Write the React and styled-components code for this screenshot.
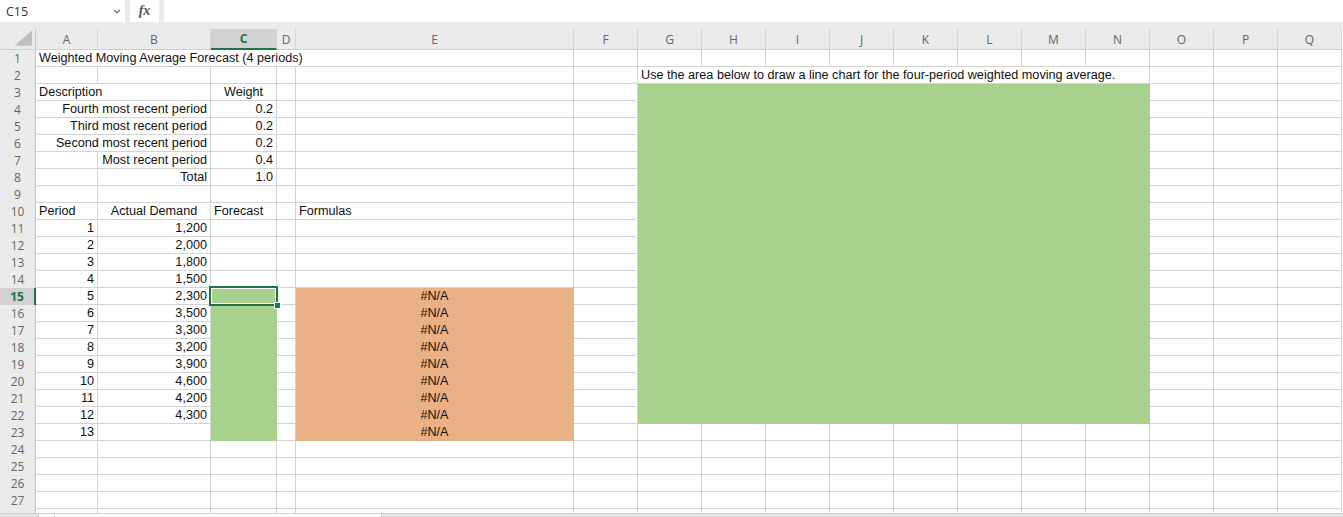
import React from "react";
import styled, { createGlobalStyle, css } from "styled-components";

const COLS = ["A", "B", "C", "D", "E", "F", "G", "H", "I", "J", "K", "L", "M", "N", "O", "P", "Q"];
const WIDTHS = [62, 113, 66, 19, 278, 64, 64, 64, 64, 64, 64, 64, 64, 64, 64, 64, 64];

const GREEN = "#a9d18e";
const ORANGE = "#ebb186";
const EXCEL = "#217346";
const GRID = "#d4d4d4";
const HEAD = "#ebebeb";

const GlobalStyle = createGlobalStyle`
  html, body { margin: 0; padding: 0; background: #fff; }
  body { font-family: "Liberation Sans", Arial, sans-serif; overflow: hidden; }
`;

const Window = styled.div`
  width: 1343px;
  height: 517px;
  display: flex;
  flex-direction: column;
  overflow: hidden;
  background: #fff;
`;

const FormulaBar = styled.div`
  display: flex;
  align-items: flex-start;
  gap: 5px;
  height: 29px;
  flex-shrink: 0;
  background: ${HEAD};
`;

const NameBox = styled.div`
  width: 125px;
  height: 22px;
  background: #fff;
  display: flex;
  align-items: center;
  justify-content: space-between;
  padding: 0 4px 0 6px;
  box-sizing: border-box;
  font-family: "Open Sans", "Noto Sans", sans-serif;
  font-size: 12.5px;
  color: #333;
`;

const FxBox = styled.div`
  width: 29px;
  height: 22px;
  background: #fff;
  display: flex;
  align-items: center;
  justify-content: center;
  font-family: "Liberation Serif", serif;
  font-style: italic;
  font-weight: 700;
  font-size: 14px;
  color: #555;
`;

const FormulaInput = styled.div`
  flex: 1;
  height: 22px;
  background: #fff;
`;

const Sheet = styled.div`
  flex: 1;
  overflow: hidden;
  display: grid;
  grid-template-columns: 36px ${WIDTHS.map((w) => w + "px").join(" ")};
  grid-template-rows: 21px;
  grid-auto-rows: 17px;
  align-content: start;
`;

const Corner = styled.div`
  background: ${HEAD};
  border-right: 1px solid #c6c6c6;
  border-bottom: 1px solid #cfcfcf;
  box-sizing: border-box;
  display: flex;
  align-items: flex-end;
  justify-content: flex-end;
`;

const ColHeader = styled.div`
  background: ${HEAD};
  border-right: 1px solid ${GRID};
  border-bottom: 1px solid #cfcfcf;
  box-sizing: border-box;
  display: flex;
  align-items: center;
  justify-content: center;
  font-family: "Open Sans", "Noto Sans", sans-serif;
  font-size: 12px;
  color: #666;
  ${(p) =>
    p.$active &&
    css`
      background: #d2d2d2;
      color: ${EXCEL};
      font-weight: 700;
      border-bottom: 2px solid ${EXCEL};
    `}
`;

const RowHeader = styled.div`
  background: ${HEAD};
  border-right: 1px solid #c6c6c6;
  box-sizing: border-box;
  display: flex;
  align-items: center;
  justify-content: center;
  font-family: "Open Sans", "Noto Sans", sans-serif;
  font-size: 12px;
  color: #666;
  ${(p) =>
    p.$active &&
    css`
      background: #d2d2d2;
      color: ${EXCEL};
      font-weight: 700;
      border-right: 2px solid ${EXCEL};
    `}
`;

const Cell = styled.div`
  grid-column: span ${(p) => p.$span || 1};
  box-sizing: border-box;
  border-right: 1px solid ${(p) => p.$fill || GRID};
  border-bottom: 1px solid ${(p) => p.$fill || GRID};
  background: ${(p) => p.$fill || "transparent"};
  padding: 0 3px;
  font-size: 12.65px;
  line-height: 17px;
  color: #111;
  white-space: nowrap;
  text-align: ${(p) => p.$align || "left"};
  ${(p) =>
    p.$selected &&
    css`
      position: relative;
      z-index: 2;
    `}
`;

const Selection = styled.div`
  position: absolute;
  top: -2px;
  left: -2px;
  right: -2px;
  bottom: -2px;
  border: 2px solid ${EXCEL};
  box-shadow: inset 0 0 0 1px #fff;
`;

const Handle = styled.div`
  position: absolute;
  right: -5px;
  bottom: -5px;
  width: 5px;
  height: 5px;
  background: ${EXCEL};
  border: 1px solid #fff;
`;

const ChartArea = styled.div`
  grid-column: 8 / 16;
  grid-row: 4 / 24;
  background: ${GREEN};
`;

const BottomBar = styled.div`
  height: 4px;
  flex-shrink: 0;
  background: #e6e6e6;
  border-top: 1px solid #d0d0d0;
  box-sizing: border-box;
  display: flex;
  padding-left: 38px;
`;

const ScrollTrack = styled.div`
  width: 342px;
  background: #fff;
  border-left: 1px solid #c6c6c6;
  border-right: 1px solid #c6c6c6;
  display: flex;
`;

const ScrollButton = styled.div`
  width: 15px;
  border-right: 1px solid #c6c6c6;
`;

const DEMAND = ["1,200", "2,000", "1,800", "1,500", "2,300", "3,500", "3,300", "3,200", "3,900", "4,600", "4,200", "4,300"];

const specs = {
  "1-0": { text: "Weighted Moving Average Forecast (4 periods)", span: 5 },
  "2-6": { text: "Use the area below to draw a line chart for the four-period weighted moving average.", span: 8 },
  "3-0": { text: "Description", span: 2 },
  "3-2": { text: "Weight", align: "center" },
  "4-0": { text: "Fourth most recent period", span: 2, align: "right" },
  "4-2": { text: "0.2", align: "right" },
  "5-0": { text: "Third most recent period", span: 2, align: "right" },
  "5-2": { text: "0.2", align: "right" },
  "6-0": { text: "Second most recent period", span: 2, align: "right" },
  "6-2": { text: "0.2", align: "right" },
  "7-1": { text: "Most recent period", align: "right" },
  "7-2": { text: "0.4", align: "right" },
  "8-1": { text: "Total", align: "right" },
  "8-2": { text: "1.0", align: "right" },
  "10-0": { text: "Period" },
  "10-1": { text: "Actual Demand", align: "center" },
  "10-2": { text: "Forecast" },
  "10-4": { text: "Formulas" },
};

for (let r = 11; r <= 23; r++) {
  specs[`${r}-0`] = { text: String(r - 10), align: "right" };
  if (DEMAND[r - 11]) specs[`${r}-1`] = { text: DEMAND[r - 11], align: "right" };
  if (r >= 15) {
    specs[`${r}-2`] = { fill: GREEN, selected: r === 15 };
    specs[`${r}-4`] = { text: "#N/A", align: "center", fill: ORANGE };
  }
}

const inChart = (r, c) => r >= 3 && r <= 22 && c >= 6 && c <= 13;

function buildRows() {
  const out = [];
  for (let r = 1; r <= 28; r++) {
    out.push(
      <RowHeader key={`h${r}`} $active={r === 15}>
        {r}
      </RowHeader>
    );
    let c = 0;
    while (c < COLS.length) {
      if (inChart(r, c)) {
        c++;
        continue;
      }
      const s = specs[`${r}-${c}`];
      if (s) {
        out.push(
          <Cell key={`${r}-${c}`} $span={s.span} $align={s.align} $fill={s.fill} $selected={s.selected}>
            {s.text}
            {s.selected && (
              <Selection>
                <Handle />
              </Selection>
            )}
          </Cell>
        );
        c += s.span || 1;
      } else {
        out.push(<Cell key={`${r}-${c}`} />);
        c++;
      }
    }
  }
  return out;
}

export default function App() {
  return (
    <>
      <GlobalStyle />
      <Window>
        <FormulaBar>
          <NameBox>
            <span>C15</span>
            <svg width="8" height="5" viewBox="0 0 8 5">
              <path d="M1 1 L4 4 L7 1" fill="none" stroke="#666" strokeWidth="1.1" />
            </svg>
          </NameBox>
          <FxBox>fx</FxBox>
          <FormulaInput />
        </FormulaBar>
        <Sheet>
          <Corner>
            <svg width="36" height="21" viewBox="0 0 36 21">
              <polygon points="33,2 33,18 15,18" fill="#bfbfbf" />
            </svg>
          </Corner>
          {COLS.map((col) => (
            <ColHeader key={col} $active={col === "C"}>
              {col}
            </ColHeader>
          ))}
          <ChartArea />
          {buildRows()}
        </Sheet>
        <BottomBar>
          <ScrollTrack>
            <ScrollButton />
          </ScrollTrack>
        </BottomBar>
      </Window>
    </>
  );
}
